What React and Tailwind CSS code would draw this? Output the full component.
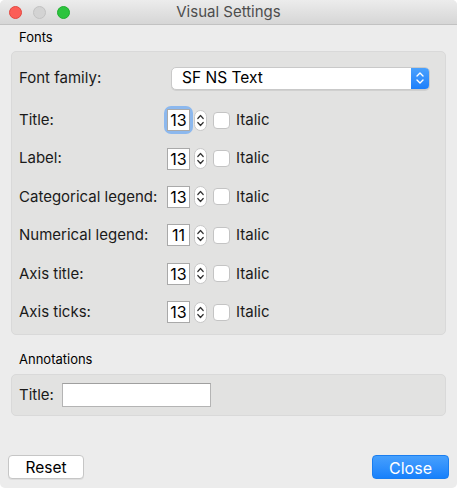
import React from 'react'

const font = { fontFamily: 'Inter, "Liberation Sans", sans-serif' }

const rows = [
  { label: 'Title:', value: '13', focus: true },
  { label: 'Label:', value: '13' },
  { label: 'Categorical legend:', value: '13' },
  { label: 'Numerical legend:', value: '11' },
  { label: 'Axis title:', value: '13' },
  { label: 'Axis ticks:', value: '13' },
]

const Stepper = () => (
  <div className="w-[13px] h-[21px] rounded-full bg-white border border-[#c8c8c8] flex items-center justify-center">
    <svg width="9" height="17" viewBox="0 0 9 17" fill="none" stroke="#333" strokeWidth="1.2" strokeLinecap="round" strokeLinejoin="round">
      <path d="M1.8 6.5 L4.5 3.5 L7.2 6.5" />
      <path d="M1.8 10.5 L4.5 13.5 L7.2 10.5" />
    </svg>
  </div>
)

const SizeRow = ({ label, value, focus }) => (
  <div className="h-[38.4px] flex items-center">
    <div className="w-[148px] text-[15px] text-[#1a1a1a]">{label}</div>
    <div className={focus ? 'rounded-[4px] ring-[3px] ring-[#8cb8ee]' : ''}>
      <div className="w-[23px] h-[22px] bg-white border border-[#a9a9a9] flex items-center justify-center text-[16px] text-black leading-none">
        {value}
      </div>
    </div>
    <div className="ml-[4px]">
      <Stepper />
    </div>
    <div className="ml-[6px] w-[17px] h-[17px] bg-white border border-[#c4c4c4] rounded-[4px]" />
    <div className="ml-[6px] text-[15px] text-[#1a1a1a]">Italic</div>
  </div>
)

export default function App() {
  return (
    <div className="w-[457px] h-[488px] bg-[#ececec] flex flex-col rounded-[5px] overflow-hidden" style={font}>
      <div className="h-[25px] shrink-0 bg-gradient-to-b from-[#ececec] to-[#d6d6d6] border-b border-[#c2c2c2] flex items-center relative">
        <div className="flex items-center gap-[11px] pl-[9px]">
          <div className="w-[13px] h-[13px] rounded-full bg-[#fc5e57] border border-[#e2473f]" />
          <div className="w-[13px] h-[13px] rounded-full bg-[#d3d3d3] border border-[#c2c2c2]" />
          <div className="w-[13px] h-[13px] rounded-full bg-[#2cc43e] border border-[#1fae2f]" />
        </div>
        <div className="absolute inset-0 flex items-center justify-center text-[15px] text-[#4d4d4d]">Visual Settings</div>
      </div>

      <div className="h-[26px] flex items-center pl-[19px] text-[13px] text-black">Fonts</div>

      <div className="mx-[11px] h-[284px] bg-[#e2e2e1] border border-[#d9d9d9] rounded-[5px] pl-[7px] pt-[14px]">
        <div className="h-[24px] flex items-center">
          <div className="w-[152px] text-[15px] text-[#1a1a1a]">Font family:</div>
          <div className="w-[259px] h-[23px] bg-white rounded-[5px] border border-[#c9c9c9] flex items-center overflow-hidden shadow-[0_1px_0_rgba(0,0,0,0.08)]">
            <div className="flex-1 pl-[10px] text-[15.5px] text-black">SF NS Text</div>
            <div className="w-[18px] h-full bg-gradient-to-b from-[#4aa1fd] to-[#1b7ffb] flex items-center justify-center">
              <svg width="10" height="16" viewBox="0 0 10 16" fill="none" stroke="white" strokeWidth="1.4" strokeLinecap="round" strokeLinejoin="round">
                <path d="M2 6 L5 3 L8 6" />
                <path d="M2 10 L5 13 L8 10" />
              </svg>
            </div>
          </div>
        </div>
        <div className="mt-[11px]">
          {rows.map((r) => (
            <SizeRow key={r.label} {...r} />
          ))}
        </div>
      </div>

      <div className="h-[39px] flex items-end pb-[5px] pl-[19px] text-[13px] text-black">Annotations</div>

      <div className="mx-[11px] h-[42px] bg-[#e2e2e1] border border-[#d9d9d9] rounded-[5px] pl-[7px] flex items-center">
        <div className="text-[15px] text-[#1a1a1a]">Title:</div>
        <div className="ml-[8px] w-[149px] h-[24px] bg-white border border-[#b4b4b4] border-t-[#9f9f9f]" />
      </div>

      <div className="flex-1" />

      <div className="flex justify-between items-center px-[8px] pb-[9px]">
        <button className="w-[76px] h-[24px] bg-white border border-[#c6c6c6] rounded-[4px] text-[15.5px] text-black shadow-[0_1px_0_rgba(0,0,0,0.06)]">
          Reset
        </button>
        <button className="w-[77px] h-[24px] bg-gradient-to-b from-[#46a0fd] to-[#1680fb] rounded-[4px] text-[16px] text-white border border-[#1a7ef0]">
          Close
        </button>
      </div>
    </div>
  )
}
